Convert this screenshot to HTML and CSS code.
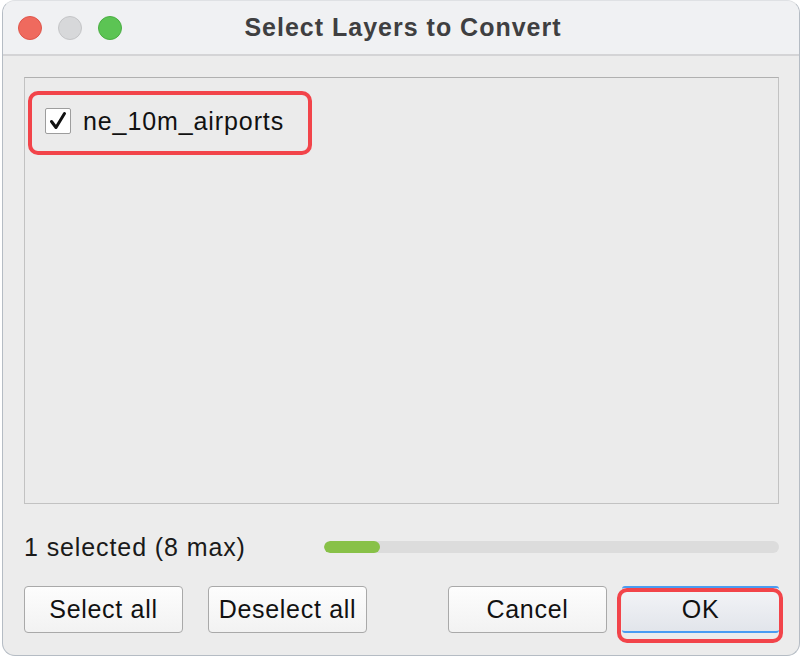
FILE: index.html
```html
<!DOCTYPE html>
<html>
<head>
<meta charset="utf-8">
<link rel="stylesheet" href="styles.css">
</head>
<body>
<div class="window">
  <div class="titlebar">
    <div class="lights">
      <span class="light red"></span>
      <span class="light grey"></span>
      <span class="light green"></span>
    </div>
    <div class="title">Select Layers to Convert</div>
  </div>
  <div class="content">
    <div class="list">
      <div class="item">
        <span class="checkbox">
          <svg width="20" height="20" viewBox="0 0 20 20"><path d="M3.5 10.5 L8 16.5 L16.5 2.5" fill="none" stroke="#111" stroke-width="3" stroke-linecap="round" stroke-linejoin="round"/></svg>
        </span>
        <span class="label">ne_10m_airports</span>
        <span class="mark mark-item"></span>
      </div>
    </div>
    <div class="status">
      <span class="count">1 selected (8 max)</span>
      <div class="progress"><div class="fill" style="width:56px"></div></div>
    </div>
    <div class="buttons">
      <div class="group">
        <button class="btn">Select all</button>
        <button class="btn">Deselect all</button>
      </div>
      <div class="group right">
        <button class="btn">Cancel</button>
        <button class="btn default">OK<span class="mark mark-ok"></span></button>
      </div>
    </div>
  </div>
</div>
</body>
</html>
```
FILE: styles.css
```css
html, body {
  margin: 0;
  padding: 0;
  background: #ffffff;
}
body {
  width: 802px;
  height: 662px;
  overflow: hidden;
  font-family: "Liberation Sans", Arial, sans-serif;
  color: #1a1a1a;
}
.window {
  box-sizing: border-box;
  margin-left: 2px;
  width: 798px;
  height: 656px;
  border: 1px solid #b5bcc4;
  border-top-color: #dfe1e4;
  border-radius: 13px;
  background: #ececec;
  overflow: hidden;
  display: flex;
  flex-direction: column;
}
.titlebar {
  height: 53px;
  flex: none;
  background: #f0f1f3;
  border-bottom: 2px solid #d4d4d6;
  position: relative;
  display: flex;
  align-items: center;
}
.lights {
  display: flex;
  gap: 16px;
  padding-left: 15px;
}
.light {
  width: 22px;
  height: 22px;
  border-radius: 50%;
  border: 1px solid transparent;
}
.light.red { background: #ef6a5e; border-color: #e0554a; }
.light.grey { background: #d7d8da; border-color: #c4c5c7; }
.light.green { background: #5cc454; border-color: #4aae42; }
.title {
  position: absolute;
  left: 0;
  right: 0;
  top: 12px;
  text-align: center;
  font-weight: bold;
  font-size: 25px;
  letter-spacing: 1px;
  color: #3f3f41;
  padding-left: 4px;
}
.content {
  flex: 1;
  padding: 21px 20px 0 21px;
  display: flex;
  flex-direction: column;
}
.list {
  height: 427px;
  flex: none;
  box-sizing: border-box;
  border: 1px solid #c2c2c2;
  border-top-color: #b0b0b0;
  background: #ebebeb;
  padding: 29px 0 0 20px;
}
.item {
  position: relative;
  display: flex;
  align-items: center;
  height: 28px;
}
.checkbox {
  box-sizing: border-box;
  width: 26px;
  height: 26px;
  border: 1px solid #9d9d9d;
  background: #fff;
  border-radius: 2px;
  display: flex;
  align-items: center;
  justify-content: center;
}
.label {
  margin-left: 12px;
  font-size: 25px;
  letter-spacing: 0.9px;
  color: #111;
}
.mark {
  position: absolute;
  border: 4px solid #f2444a;
  border-radius: 10px;
  box-sizing: border-box;
  pointer-events: none;
}
.mark-item {
  left: -17px;
  top: -16px;
  width: 284px;
  height: 64px;
}
.status {
  display: flex;
  align-items: center;
  height: 30px;
  margin-top: 28px;
}
.count {
  font-size: 25px;
  letter-spacing: 0.9px;
  color: #1a1a1a;
  width: 300px;
  flex: none;
}
.progress {
  flex: 1;
  height: 12px;
  border-radius: 6px;
  background: #dcdcdc;
  overflow: hidden;
}
.fill {
  height: 100%;
  background: #88c148;
  border-radius: 6px;
}
.buttons {
  display: flex;
  justify-content: space-between;
  margin-top: 24px;
}
.group {
  display: flex;
  gap: 25px;
}
.group.right {
  gap: 15px;
}
.btn {
  position: relative;
  box-sizing: border-box;
  width: 159px;
  height: 47px;
  border: 1px solid #a9a9a9;
  border-radius: 4px;
  background: linear-gradient(#fdfdfd, #f2f2f2);
  font-family: "Liberation Sans", Arial, sans-serif;
  font-size: 25px;
  letter-spacing: 0.7px;
  color: #111;
  padding: 0;
}
.btn.default {
  width: 157px;
  border: none;
  border-top: 2px solid #4a9cf2;
  border-bottom: 2px solid #4a9cf2;
  border-radius: 3px;
  background: linear-gradient(#f3f4f7, #e2e5eb);
}
.mark-ok {
  left: -5px;
  top: 0px;
  width: 166px;
  height: 55px;
}
```
